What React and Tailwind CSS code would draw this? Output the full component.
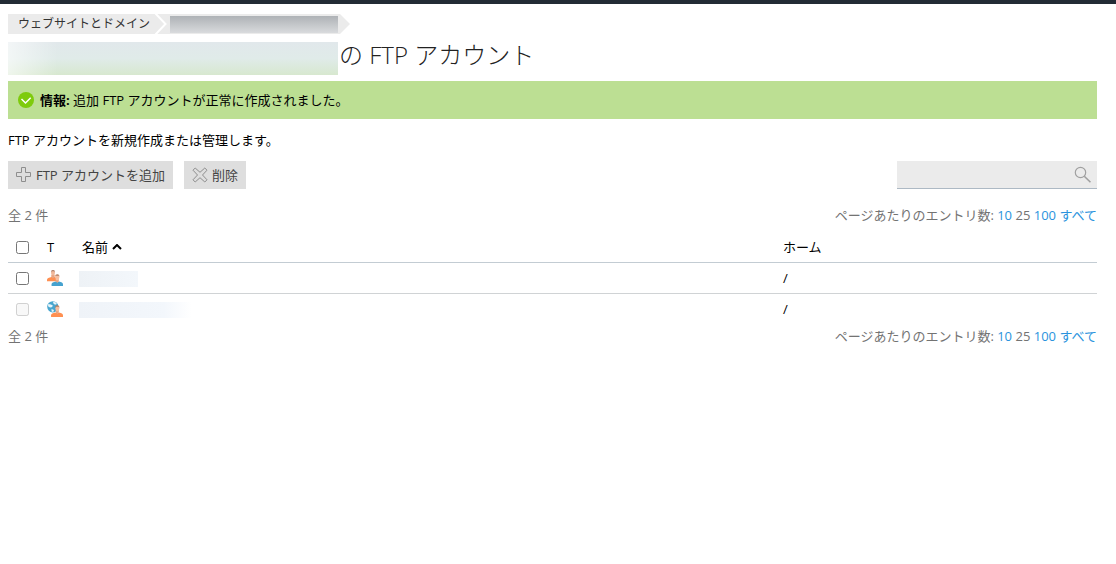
function PlusIcon() {
  return (
    <svg width="16" height="16" viewBox="0 0 16 16" fill="none" stroke="#8e8e8e" aria-hidden="true">
      <path d="M5.500 .5h4v5h5v4h-5v5h-4v-5h-5v-4h5z" />
    </svg>
  );
}

function CrossIcon() {
  return (
    <svg width="16" height="16" viewBox="0 0 16 16" fill="none" stroke="#8e8e8e" strokeLinejoin="round" aria-hidden="true">
      <path d="M3.200 1 8 5.300 12.800 1 15 3.200 10.500 8 15 12.800 12.800 15 8 10.700 3.200 15 1 12.800 5.500 8 1 3.200z" />
    </svg>
  );
}

function SearchIcon() {
  return (
    <svg width="18" height="18" viewBox="0 0 18 18" fill="none" stroke="#a0a0a0" aria-hidden="true">
      <circle cx="6.500" cy="6.500" r="5.200" strokeWidth="1.200" />
      <path d="m10.300 10.300 6.200 6" strokeWidth="1.600" />
    </svg>
  );
}

function CheckIcon() {
  return (
    <svg className="shrink-0" width="16" height="16" viewBox="0 0 16 16" fill="none" aria-hidden="true">
      <circle cx="8" cy="8" r="8" fill="#7ecb0c" />
      <path d="m3.500 7 4 4 5.200-5.200" stroke="#fff" strokeWidth="1.500" />
    </svg>
  );
}

function UsersIcon() {
  return (
    <svg width="16" height="16" viewBox="0 0 16 16" role="img" aria-label="追加 FTP アカウント">
      <path d="M0 9.800C0 8 2 7.600 4.500 7V5h3v2c2 .6 3.500 1.200 3.500 2.800v1.400H0z" fill="#ff9052" />
      <path d="M4.700 4.500h2.600v3L6 8.300 4.700 7.500z" fill="#e5a583" />
      <ellipse cx="6" cy="2.800" rx="2" ry="2.600" fill="#f2b899" />
      <path d="M4 2.500C3.900.7 4.700 0 6 0s2.100.7 2 2.500L7.400 1.300H4.600z" fill="#a87962" />
      <path d="M4.500 14.500c0-2 2-2.500 4-3l1.700.8 1.800-.8c2.500.5 4 1 4 3V16H5c-.4 0-.5-.5-.5-1.500z" fill="#45a2cf" />
      <path d="M8.800 9h3v2.500l-1.500 1.200-1.500-1.200z" fill="#e5a583" />
      <ellipse cx="10.300" cy="7.500" rx="2" ry="2.700" fill="#f6bea0" />
      <path d="M8.200 7C8 5 9 4.300 10.300 4.300S12.600 5 12.400 7l-.6-1.200H8.900z" fill="#b07b5e" />
    </svg>
  );
}

function GlobeUserIcon() {
  return (
    <svg width="16" height="16" viewBox="0 0 16 16" role="img" aria-label="システムユーザ">
      <circle cx="5.800" cy="5.800" r="5.600" fill="#48a6cf" />
      <path d="M1.200 3 4 3.500l2 1.300-1.300 1.500L3 6.500 1 5.300zM6 .8l2.500.5L10 3 8 3.800 6.400 2.500zM4.500 8l2.500 1-.8 2-1.600-.6z" fill="#e8f5fa" />
      <path d="M4 14.500c0-2 2-2.500 4-3l2.200.8 1.800-.8c2.500.5 4 1 4 3V16H4.500c-.4 0-.5-.5-.5-1.500z" fill="#ff9052" />
      <path d="M8.800 9h3v2.500l-1.500 1.200-1.500-1.200z" fill="#e5a583" />
      <ellipse cx="10.300" cy="7.500" rx="2" ry="2.700" fill="#f6bea0" />
      <path d="M8.200 7C8 5 9 4.300 10.300 4.300S12.600 5 12.400 7l-.6-1.200H8.900z" fill="#b07b5e" />
    </svg>
  );
}

function Pager() {
  return (
    <div className="flex h-5 items-center justify-between text-[#737373]">
      <span>全 2 件</span>
      <nav aria-label="ページあたりのエントリ数">
        ページあたりのエントリ数: <a href="#10" className="text-[#2a93dd]">10</a> <span>25</span>{" "}
        <a href="#100" className="text-[#2a93dd]">100</a>{" "}
        <a href="#all" className="text-[#2a93dd]">すべて</a>
      </nav>
    </div>
  );
}

function Check(props) {
  return <input type="checkbox" className="block size-[13px]" {...props} />;
}

export default function App() {
  return (
    <div className="min-h-screen border-t-4 border-[#222b35] bg-white pt-2.5 pr-[19px] pb-6 pl-2 font-['Open_Sans','Noto_Sans_CJK_JP',sans-serif] text-[13px] leading-5 text-black">
      <nav aria-label="パンくずリスト" className="flex h-5 items-center">
        <a href="#domains" className="flex h-5 items-center bg-[#ebebeb] pl-2.5 text-xs text-[#333]">
          ウェブサイトとドメイン
        </a>
        <svg width="20" height="20" viewBox="0 0 20 20" aria-hidden="true">
          <path d="M0 0h20v20H0z" fill="#ebebeb" />
          <path d="m5 -1 10.500 11L5 21" fill="none" stroke="#fff" strokeWidth="2" />
        </svg>
        <span className="flex h-5 w-[168px] items-center bg-[#ebebeb]">
          <span className="h-[17px] w-full bg-linear-to-b from-[#aeb2b6] to-[#d9dbdd]" />
        </span>
        <svg width="12" height="20" viewBox="0 0 12 20" aria-hidden="true">
          <path d="M0 0h2l10 10L2 20H0z" fill="#ebebeb" />
        </svg>
      </nav>

      <h1 className="mt-2 flex h-[33px] items-start text-2xl leading-[26px] font-light text-[#222]">
        <span className="mr-px h-[33px] w-[330px] bg-linear-to-b from-[#e1e8eb] via-[#e0ebe9] to-[#d7e8cf]">
          <span className="block h-full w-full bg-linear-to-r from-white/60 to-transparent to-15%" />
        </span>
        の FTP アカウント
      </h1>

      <div role="status" className="mt-1.5 flex h-[38px] items-center gap-1.5 bg-[#bcdf93] px-2.5">
        <CheckIcon />
        <p><b>情報:</b> 追加 FTP アカウントが正常に作成されました。</p>
      </div>

      <p className="mt-[11px]">FTP アカウントを新規作成または管理します。</p>

      <div className="mt-[11px] flex items-start justify-between">
        <div className="flex gap-[11px]">
          <button type="button" className="flex h-7 items-center gap-1 bg-[#dedede] px-2 text-[#444]">
            <PlusIcon />
            FTP アカウントを追加
          </button>
          <button type="button" className="flex h-7 items-center gap-1 bg-[#dedede] px-2 text-[#444]">
            <CrossIcon />
            削除
          </button>
        </div>
        <form role="search" className="flex h-7 w-[200px] items-center border-b border-[#adb9c4] bg-[#ebebeb] pr-[5px]">
          <input type="search" aria-label="検索" className="h-full min-w-0 flex-1 bg-transparent px-2 outline-none" />
          <button type="button" aria-label="検索">
            <SearchIcon />
          </button>
        </form>
      </div>

      <div className="mt-4">
        <Pager />
      </div>

      <table className="mt-1.5 w-full table-fixed border-collapse text-left">
        <colgroup>
          <col className="w-[31px]" />
          <col className="w-10" />
          <col />
          <col className="w-[322px]" />
        </colgroup>
        <thead>
          <tr className="h-[31px] border-b border-[#c3ccd3]">
            <th className="pt-0.5 pl-2"><Check aria-label="すべて選択" /></th>
            <th className="pt-0.5 pl-2 font-normal">T</th>
            <th className="pt-0.5 pl-[3px] font-normal" aria-sort="ascending">
              <button type="button" className="flex items-center gap-1">
                名前
                <svg width="10" height="6" viewBox="0 0 10 6" fill="none" stroke="#000" strokeWidth="2" aria-hidden="true">
                  <path d="m1 5 4-4 4 4" />
                </svg>
              </button>
            </th>
            <th className="pt-0.5 pl-2 font-normal">ホーム</th>
          </tr>
        </thead>
        <tbody>
          <tr className="h-[31px] border-b border-[#d0d3d5]">
            <td className="pt-0.5 pl-2"><Check aria-label="追加アカウントを選択" /></td>
            <td className="pl-2"><UsersIcon /></td>
            <td className="pt-0.5"><span className="block h-4 w-[59px] bg-linear-to-r from-[#eef2f6] to-[#f3f7fb]" /></td>
            <td className="pl-2">/</td>
          </tr>
          <tr className="h-[31px]">
            <td className="pt-0.5 pl-2"><Check aria-label="システムユーザを選択" disabled /></td>
            <td className="pl-2"><GlobeUserIcon /></td>
            <td className="pt-0.5"><span className="block h-4 w-[113px] bg-linear-to-r from-[#eff3f8] via-[#f3f7fc] via-75% to-white" /></td>
            <td className="pl-2">/</td>
          </tr>
        </tbody>
      </table>

      <div className="mt-0.5">
        <Pager />
      </div>
    </div>
  );
}
